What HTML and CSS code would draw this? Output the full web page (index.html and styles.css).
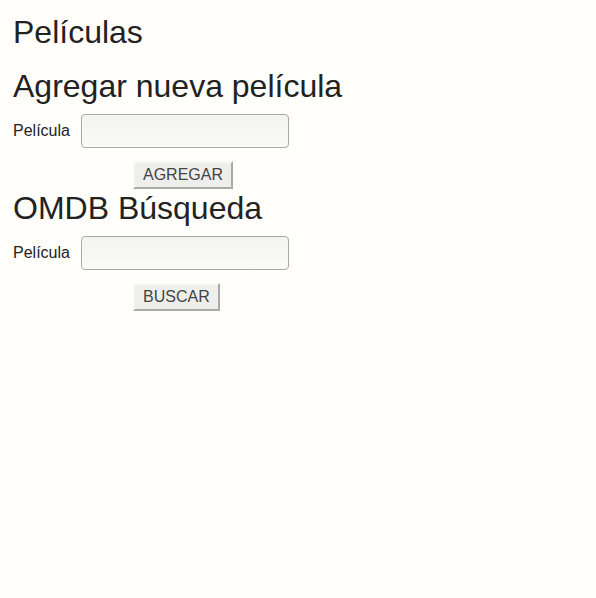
FILE: index.html
```html
<!DOCTYPE html>
<html lang="es">
<head>
<meta charset="utf-8">
<title>Películas</title>
<link rel="stylesheet" href="styles.css">
</head>
<body>
<main class="page">
  <h1 class="title">Películas</h1>
  <section class="section">
    <h2 class="section-title">Agregar nueva película</h2>
    <form class="form">
      <div class="row">
        <label class="label">Película</label>
        <input class="input" type="text">
      </div>
      <div class="actions">
        <button class="btn" type="button">AGREGAR</button>
      </div>
    </form>
  </section>
  <section class="section">
    <h2 class="section-title">OMDB Búsqueda</h2>
    <form class="form">
      <div class="row">
        <label class="label">Película</label>
        <input class="input" type="text">
      </div>
      <div class="actions">
        <button class="btn" type="button">BUSCAR</button>
      </div>
    </form>
  </section>
</main>
</body>
</html>
```
FILE: styles.css
```css
html, body {
  margin: 0;
  padding: 0;
  background: #fffefa;
}
body {
  font-family: "Liberation Sans", Arial, sans-serif;
  color: #222;
}
.page {
  padding: 14px 13px;
  display: flex;
  flex-direction: column;
  gap: 1px;
}
.title {
  margin: 0 0 17px;
  font-size: 32px;
  font-weight: normal;
  line-height: 36px;
}
.section-title {
  margin: 0;
  font-size: 32px;
  font-weight: normal;
  line-height: 36px;
}
.form {
  display: flex;
  flex-direction: column;
  gap: 13px;
  margin-top: 10px;
}
.row {
  display: flex;
  align-items: center;
  gap: 11px;
}
.label {
  font-size: 16px;
  color: #222;
}
.input {
  width: 208px;
  height: 34px;
  box-sizing: border-box;
  margin: 0;
  border: 1px solid #a9a9a9;
  border-radius: 4px;
  background: linear-gradient(#f3f3f1, #fafaf8);
}
.actions {
  padding-left: 120px;
  display: flex;
}
.btn {
  font-family: "Liberation Sans", Arial, sans-serif;
  font-size: 16px;
  color: #444;
  background: #eeeeec;
  border: 2px solid;
  border-color: #f8f8f6 #aaa #aaa #f8f8f6;
  padding: 3px 8px;
  height: 28px;
  margin: 0;
}
```
